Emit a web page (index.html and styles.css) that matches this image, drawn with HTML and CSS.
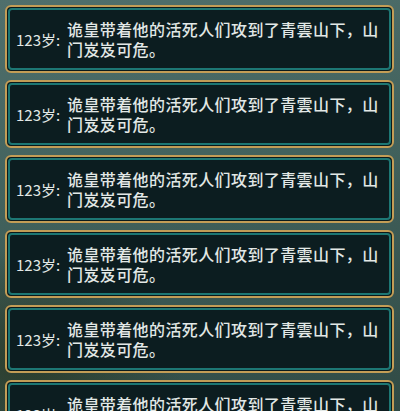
FILE: index.html
```html
<!DOCTYPE html>
<html lang="zh">
<head>
<meta charset="utf-8">
<link rel="stylesheet" href="styles.css">
</head>
<body>
<div class="list">
  <div class="card"><div class="inner"><span class="age">123岁:</span><p class="msg">诡皇带着他的活死人们攻到了青雲山下，山门岌岌可危。</p></div></div>
  <div class="card"><div class="inner"><span class="age">123岁:</span><p class="msg">诡皇带着他的活死人们攻到了青雲山下，山门岌岌可危。</p></div></div>
  <div class="card"><div class="inner"><span class="age">123岁:</span><p class="msg">诡皇带着他的活死人们攻到了青雲山下，山门岌岌可危。</p></div></div>
  <div class="card"><div class="inner"><span class="age">123岁:</span><p class="msg">诡皇带着他的活死人们攻到了青雲山下，山门岌岌可危。</p></div></div>
  <div class="card"><div class="inner"><span class="age">123岁:</span><p class="msg">诡皇带着他的活死人们攻到了青雲山下，山门岌岌可危。</p></div></div>
  <div class="card"><div class="inner"><span class="age">123岁:</span><p class="msg">诡皇带着他的活死人们攻到了青雲山下，山门岌岌可危。</p></div></div>
</div>
</body>
</html>
```
FILE: styles.css
```css
html, body {
  margin: 0;
  padding: 0;
  width: 400px;
  height: 411px;
  overflow: hidden;
}
body {
  background:
    radial-gradient(ellipse 220px 160px at 30px 360px, rgba(40,55,35,0.8), rgba(40,55,35,0) 70%),
    linear-gradient(170deg, #4f6f6c 0%, #41615c 45%, #304a45 100%);
  font-family: "Noto Sans CJK SC", "Noto Sans", sans-serif;
}
.list {
  display: flex;
  flex-direction: column;
  gap: 7px;
  padding: 5px 6px 0 5px;
}
.card {
  flex: none;
  height: 68px;
  box-sizing: border-box;
  border: 2px solid #c39d56;
  border-radius: 6px;
  background: #0a1a1c;
  padding: 1px;
  display: flex;
}
.inner {
  flex: 1;
  box-sizing: border-box;
  border: 2px solid #1d7774;
  border-radius: 4px;
  background: #0c1d20;
  display: flex;
  align-items: center;
  padding: 0 4px 0 6px;
  color: #e2e8e6;
}
.age {
  flex: none;
  font-size: 15px;
  font-weight: 400;
  width: 51px;
  white-space: nowrap;
}
.msg {
  margin: 0;
  flex: 1;
  font-size: 16px;
  font-weight: 500;
  line-height: 20px;
  letter-spacing: 0.4px;
}
```
